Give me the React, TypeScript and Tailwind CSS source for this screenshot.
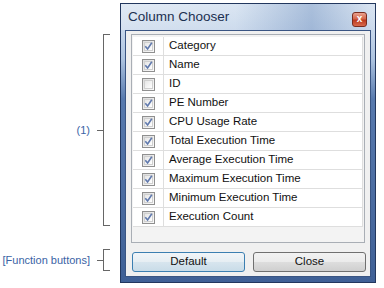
import React from 'react';

const columns = [
  { label: 'Category', checked: true },
  { label: 'Name', checked: true },
  { label: 'ID', checked: false },
  { label: 'PE Number', checked: true },
  { label: 'CPU Usage Rate', checked: true },
  { label: 'Total Execution Time', checked: true },
  { label: 'Average Execution Time', checked: true },
  { label: 'Maximum Execution Time', checked: true },
  { label: 'Minimum Execution Time', checked: true },
  { label: 'Execution Count', checked: true },
];

const CheckBox: React.FC<{ checked: boolean }> = ({ checked }) => (
  <span className="w-[13px] h-[13px] border border-[#8f8f8f] bg-gradient-to-br from-[#dcdcdc] to-[#fbfbfb] flex items-center justify-center">
    <span className="w-[9px] h-[9px] border border-[#cfcfcf] bg-gradient-to-br from-[#e6e6e6] to-white flex items-center justify-center">
      {checked && (
        <svg width="9" height="9" viewBox="0 0 9 9" className="overflow-visible">
          <path d="M1.3 4.2 L3.6 7 L7.8 0.8" fill="none" stroke="#6079ad" strokeWidth="1.6" />
        </svg>
      )}
    </span>
  </span>
);

const Bracket: React.FC<{ label: string; height: string }> = ({ label, height }) => (
  <div className={`flex items-center justify-end pr-[10px] ${height}`}>
    <span className="text-[11px] text-[#3a63a5] mr-[7px]">{label}</span>
    <span className="w-[6px] h-px bg-[#666]" />
    <span className="w-[7px] h-full border-l border-y border-[#666]" />
  </div>
);

const App: React.FC = () => {
  return (
    <main className="w-[384px] h-[288px] bg-white flex font-['Liberation_Sans',Arial,sans-serif] overflow-hidden">

      {/* Annotations */}
      <div className="w-[120px] flex flex-col">
        <div className="h-[34px]" />
        <Bracket label="(1)" height="h-[192px]" />
        <div className="h-[23px]" />
        <Bracket label="[Function buttons]" height="h-[22px]" />
      </div>

      {/* Dialog */}
      <div className="mt-[3px] w-[256px] h-[280px] border border-[#22375e] bg-[linear-gradient(to_bottom,#d7e3f1_0px,#c6d6ea_28px,#aec4e0_55px,#587aae_95px,#3f6096_100%)] flex flex-col">
        {/* Title bar */}
        <div className="h-[26px] flex items-center pl-[7px] pr-[8px] bg-[linear-gradient(to_right,rgba(255,255,255,0.25)_0%,rgba(255,255,255,0.1)_45%,rgba(70,110,170,0.3)_75%,rgba(255,255,255,0.1)_100%)]">
          <span className="text-[13.5px] text-[#1c3050] flex-1">Column Chooser</span>
          <span className="w-[15px] h-[15px] mt-[4px] rounded-[3px] border border-[#7a2c1f] bg-[linear-gradient(to_bottom,#eaa28f_0%,#d4654a_45%,#bb3a1f_55%,#d9694c_100%)] flex items-center justify-center text-white text-[10px] font-bold leading-none">
            x
          </span>
        </div>

        {/* Client area */}
        <div className="flex-1 mx-[4px] mb-[5px] border border-[#3a5583] bg-[#f0f0f0] flex flex-col">
          <div className="mt-[3px] mx-[5px] h-[209px] border border-[#a9aeb5] bg-[#f3f3f3] px-[1px] pt-[2px] flex flex-col">
            {columns.map(({ label, checked }) => (
              <div key={label} className="flex h-[19px] border-b border-[#dedede]">
                <div className="w-[31px] bg-white border-r border-[#dedede] flex items-center justify-center">
                  <CheckBox checked={checked} />
                </div>
                <div className="flex-1 bg-white border-r border-[#dedede] flex items-center pl-[5px] text-[11.5px] text-[#111]">
                  {label}
                </div>
              </div>
            ))}
          </div>

          <div className="flex gap-[8px] pl-[6px] pr-[4px] mt-[9px]">
            <button className="flex-1 h-[20px] rounded-[3px] border border-[#3c7fb1] bg-[linear-gradient(to_bottom,#f1f5f8_0%,#e6eef3_50%,#d7e5ee_51%,#c9dce8_100%)] text-[11.5px] text-[#111]">
              Default
            </button>
            <button className="flex-1 h-[20px] rounded-[3px] border border-[#707070] bg-[linear-gradient(to_bottom,#f2f2f2_0%,#ebebeb_50%,#dddddd_51%,#cfcfcf_100%)] text-[11.5px] text-[#111]">
              Close
            </button>
          </div>
        </div>
      </div>

    </main>
  );
};

export default App;
